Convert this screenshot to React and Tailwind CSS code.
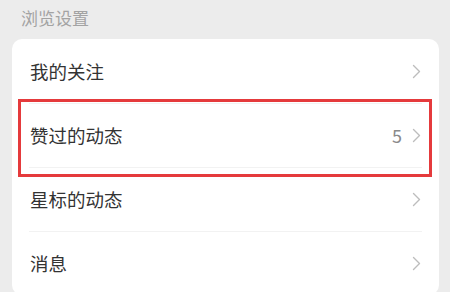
const rows = [
  { label: "我的关注" },
  { label: "赞过的动态", count: 5, marked: true },
  { label: "星标的动态" },
  { label: "消息" },
];

function Chevron() {
  return (
    <svg width="9" height="15" viewBox="0 0 9 15" fill="none" className="shrink-0">
      <path d="M1.5 1.5 L7.5 7.5 L1.5 13.5" stroke="#bdbdbd" strokeWidth="1.4" strokeLinecap="round" strokeLinejoin="round" />
    </svg>
  );
}

function Row({ row, last }) {
  return (
    <div className="relative">
      <div className="flex h-[63px] items-center justify-between pl-[18px] pr-[18px]">
        <span className="text-[18.5px] text-[#333333]">{row.label}</span>
        <div className="flex items-center gap-[10px]">
          {row.count != null && <span className="text-[18px] text-[#8a8a8a]">{row.count}</span>}
          <Chevron />
        </div>
      </div>
      {!last && <div className="ml-[17px] mr-[17px] h-px bg-[#f2f2f2]" />}
      {/* annotation box */}
      {row.marked && (
        <div className="pointer-events-none absolute -top-[5px] -bottom-[9px] left-[6px] right-[7px] border-[3px] border-[#e53a3c]" />
      )}
    </div>
  );
}

export default function App() {
  return (
    <div
      className="h-[292px] w-[450px] overflow-hidden bg-[#ececec]"
      style={{ fontFamily: '"Noto Sans CJK SC", "Noto Sans", sans-serif' }}
    >
      <div className="pl-[21px] pt-[7px] text-[17px] leading-[22px] text-[#a3a3a3]">浏览设置</div>
      <div className="ml-[12px] mr-[11px] mt-[10px] rounded-[10px] bg-white pt-px">
        {rows.map((row, i) => (
          <Row key={row.label} row={row} last={i === rows.length - 1} />
        ))}
      </div>
    </div>
  );
}
